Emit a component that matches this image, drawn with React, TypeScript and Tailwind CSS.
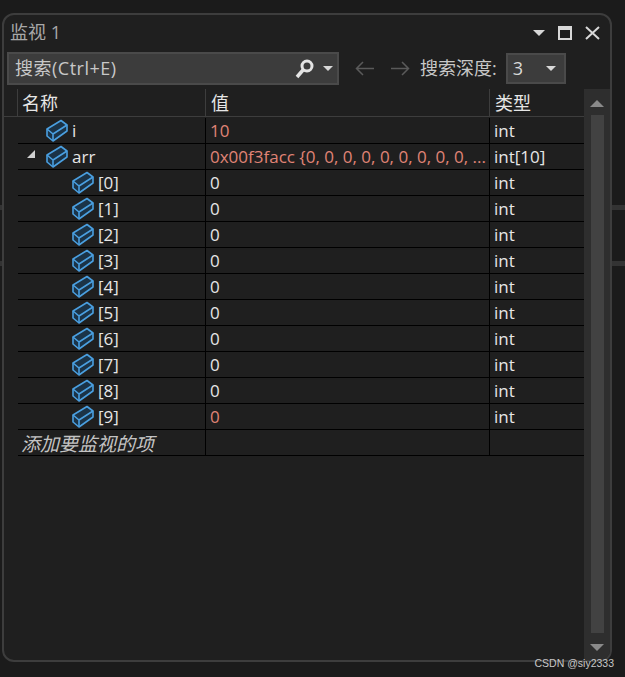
const font = { sans: 'font-["Segoe_UI","Open_Sans","Noto_Sans_CJK_SC",sans-serif]' }

const VarIcon = () => (
  <svg width="22" height="23" viewBox="0 0 22 23" fill="none" className="shrink-0">
    <path d="M1 10 L15 1.5 L21 6 L21 12 L7 22 L1 17 Z" fill="#1b3347" stroke="#4a9fe0" strokeWidth="1.6" strokeLinejoin="round" />
    <path d="M1 10 L7 15 L21 6 M7 15 L7 22" stroke="#4a9fe0" strokeWidth="1.6" strokeLinejoin="round" />
  </svg>
)

const rows = [
  { name: 'i', value: '10', type: 'int', indent: 'pl-[28px]', changed: true },
  { name: 'arr', value: '0x00f3facc {0, 0, 0, 0, 0, 0, 0, 0, 0, ...', type: 'int[10]', indent: 'pl-[28px]', changed: true, expand: true },
  ...[0, 1, 2, 3, 4, 5, 6, 7, 8, 9].map((n) => ({
    name: `[${n}]`,
    value: '0',
    type: 'int',
    indent: 'pl-[54px]',
    changed: n === 9,
  })),
]

const Row = ({ row }: { row: (typeof rows)[number] }) => (
  <div className="flex h-[26px] border-b border-black text-[17px] text-[#e6e6e6]">
    <div className={`relative flex w-[188px] shrink-0 items-center gap-[4px] border-r border-black ${row.indent}`}>
      {row.expand && (
        <span className="absolute left-[9px] top-[6px] h-0 w-0 border-b-[8px] border-l-[8px] border-b-[#d0d0d0] border-l-transparent" />
      )}
      <VarIcon />
      <span className="pt-[1px]">{row.name}</span>
    </div>
    <div className={`flex w-[284px] shrink-0 items-center overflow-hidden whitespace-nowrap border-r border-black pl-[4px] pt-[1px] ${row.changed ? 'text-[#e08476]' : ''}`}>
      {row.value}
    </div>
    <div className="flex flex-1 items-center pl-[4px] pt-[1px]">{row.type}</div>
  </div>
)

export default function App() {
  return (
    <div className={`relative h-[677px] w-[625px] overflow-hidden bg-[#1b1b1b] pl-[2px] pr-[13px] pt-[13px] ${font.sans}`}>
      <div className="absolute left-0 top-[205px] h-[5px] w-full bg-[#333333]" />
      <div className="absolute left-0 top-[261px] h-[5px] w-full bg-[#333333]" />
      <div className="relative flex h-[649px] flex-col rounded-[12px] border-2 border-[#3d3d3d] bg-[#1f1f1f]">
        {/* title */}
        <div className="flex h-[37px] shrink-0 items-center justify-between pb-[2px] pl-[6px] pr-[10px]">
          <span className="text-[18px] text-[#a8a8a8]">监视 1</span>
          <div className="flex items-center gap-[13px]">
            <span className="h-0 w-0 border-x-[6px] border-t-[6px] border-x-transparent border-t-[#d8d8d8]" />
            <span className="h-[14px] w-[14px] border-x-2 border-b-2 border-t-[4px] border-[#d8d8d8]" />
            <svg width="15" height="14" viewBox="0 0 15 14" stroke="#d8d8d8" strokeWidth="2"><path d="M1 1 L14 13 M14 1 L1 13" /></svg>
          </div>
        </div>

        {/* search */}
        <div className="flex h-[33px] shrink-0 items-center pl-[3px]">
          <div className="flex h-[33px] w-[332px] items-center border-2 border-[#4a4a4a] bg-[#3c3c3c] pl-[6px] pr-[4px] text-[18px] tracking-[0.5px] text-[#c8c8c8]">
            <span className="flex-1">搜索(Ctrl+E)</span>
            <svg width="20" height="20" viewBox="0 0 20 20" fill="none" className="mr-[8px]">
              <circle cx="12" cy="7" r="5" stroke="#e4e4e4" strokeWidth="3" />
              <path d="M8 11 L2 18" stroke="#e4e4e4" strokeWidth="3.5" />
            </svg>
            <span className="h-0 w-0 border-x-[5px] border-t-[5px] border-x-transparent border-t-[#d8d8d8]" />
          </div>
          <svg width="20" height="15" viewBox="0 0 20 15" fill="none" stroke="#5a5a5a" strokeWidth="1.5" className="ml-[16px]"><path d="M19 7.5 H1.5 M8 1 L1.5 7.5 L8 14" /></svg>
          <svg width="20" height="15" viewBox="0 0 20 15" fill="none" stroke="#5a5a5a" strokeWidth="1.5" className="ml-[15px]"><path d="M1 7.5 H18.5 M12 1 L18.5 7.5 L12 14" /></svg>
          <span className="ml-[10px] whitespace-nowrap text-[18px] text-[#c8c8c8]">搜索深度:</span>
          <div className="ml-[9px] flex h-[31px] w-[60px] items-center justify-between border-2 border-[#4a4a4a] bg-[#3c3c3c] pl-[5px] pr-[8px] text-[18px] text-[#d8d8d8]">
            <span>3</span>
            <span className="h-0 w-0 border-x-[5px] border-t-[5px] border-x-transparent border-t-[#d8d8d8]" />
          </div>
        </div>

        {/* table + scrollbar */}
        <div className="mt-[4px] flex min-h-0 flex-1">
          <div className="flex w-[580px] shrink-0 flex-col">
            <div className="flex h-[28px] shrink-0 border-b border-[#3d3d3d] pl-[13px] text-[18px] text-[#e6e6e6]">
              <div className="flex w-[189px] shrink-0 items-center border-x border-[#3d3d3d] pl-[4px] pt-[2px]">名称</div>
              <div className="flex w-[284px] shrink-0 items-center border-r border-[#3d3d3d] pl-[5px] pt-[2px]">值</div>
              <div className="flex flex-1 items-center pl-[5px] pt-[2px]">类型</div>
            </div>
            <div className="ml-[14px] mt-[1px]">
              {rows.map((row) => (
                <Row key={row.name} row={row} />
              ))}
              <div className="flex h-[26px] border-b border-black text-[19px] italic text-[#c4c4c4]">
                <div className="flex w-[188px] shrink-0 items-center whitespace-nowrap border-r border-black pl-[3px] pt-[3px]">添加要监视的项</div>
                <div className="w-[284px] shrink-0 border-r border-black" />
              </div>
            </div>
          </div>
          <div className="flex w-[26px] shrink-0 flex-col items-center rounded-br-[10px] bg-[#2e2e2e]">
            <span className="mt-[11px] h-0 w-0 border-x-[7px] border-b-[7px] border-x-transparent border-b-[#8a8a8a]" />
            <div className="mt-[8px] w-[13px] flex-1 bg-[#424242]" />
            <span className="mb-[9px] mt-[11px] h-0 w-0 border-x-[7px] border-t-[7px] border-x-transparent border-t-[#8a8a8a]" />
          </div>
        </div>
      </div>
      <span className="absolute bottom-[5px] right-[11px] font-['Liberation_Sans'] text-[10.5px] text-[#c8c8c8]">CSDN @siy2333</span>
    </div>
  )
}
